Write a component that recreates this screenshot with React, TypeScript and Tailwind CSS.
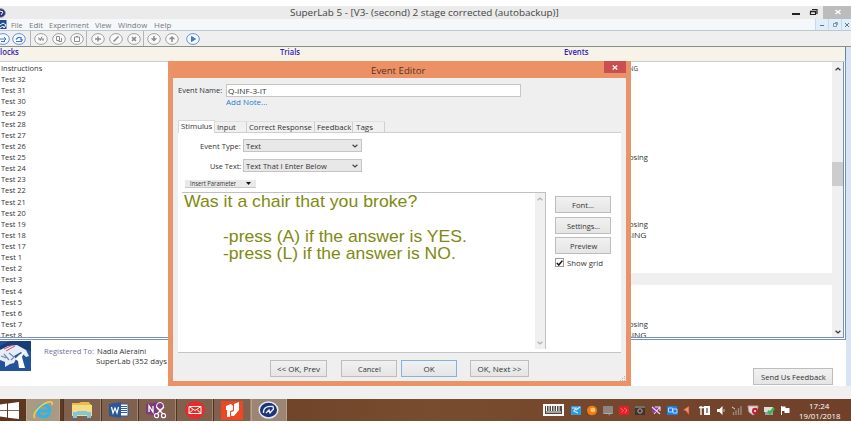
import { useLayoutEffect, useRef, useState } from "react";
import type { ReactNode } from "react";

/* Single line of text condensed or expanded to a fixed width. */
function Fit({ w, children, className = "" }: { w: number; children: string; className?: string }) {
  const ref = useRef<HTMLSpanElement>(null);
  const [k, setK] = useState(1);
  useLayoutEffect(() => {
    if (ref.current) setK(w / ref.current.offsetWidth);
  }, [w, children]);
  return (
    <span className={`inline-block shrink-0 whitespace-nowrap text-left ${className}`} style={{ width: w }}>
      <span ref={ref} className="inline-block origin-left" style={{ transform: `scaleX(${k})` }}>
        {children}
      </span>
    </span>
  );
}

const blocks: [string, number][] = [
  ["Instructions", 41],
  ...[32, 31, 30, 29, 28, 27, 26, 25, 24, 23, 22, 21, 20, 19, 18, 17].map((n): [string, number] => [`Test ${n}`, 25]),
  ...[1, 2, 3, 4, 5, 6, 7, 8].map((n): [string, number] => [`Test ${n}`, 21]),
];

const events: Record<number, [string, number]> = {
  0: ["ING", 11],
  8: ["losing", 21],
  14: ["losing", 21],
  15: ["SING", 19],
  23: ["losing", 21],
  24: ["SING", 19],
};

function RoundTool({ blue, children }: { blue?: boolean; children: ReactNode }) {
  return (
    <svg
      className={blue ? "h-[12px] w-[14px] shrink-0 text-[#3b78d8]" : "h-[12px] w-[14px] shrink-0 text-[#8c8c8c]"}
      viewBox="0 0 14 12"
      fill="none"
      stroke="currentColor"
    >
      <ellipse cx="7" cy="6" rx="6.3" ry="5.4" fill="#fafafa" strokeWidth="0.8" />
      {children}
    </svg>
  );
}

function Divider() {
  return <div className="h-full w-px shrink-0 bg-[#b4b4b4]" />;
}

function Chevron({ up, className = "" }: { up?: boolean; className?: string }) {
  return (
    <svg className={`h-[4px] w-[6px] ${className}`} viewBox="0 0 6 4" fill="none" stroke="currentColor" strokeWidth="1.2">
      <path d={up ? "M.6 3.3L3 1l2.4 2.3" : "M.6.7L3 3 5.4.7"} />
    </svg>
  );
}

function Button({ size, w, primary, children }: { size: string; w: number; primary?: boolean; children: string }) {
  return (
    <button
      className={`flex shrink-0 items-center justify-center border bg-gradient-to-b from-[#f1f1f1] to-[#e5e5e5] ${
        primary ? "border-[#7fb2e5]" : "border-[#bdbdbd]"
      } ${size}`}
    >
      <Fit w={w}>{children}</Fit>
    </button>
  );
}

function Combo({ label, lw, value, vw }: { label: string; lw: number; value: string; vw: number }) {
  return (
    <div className="flex h-[13px] items-center">
      <div className="flex w-[63px] justify-end pr-[2px]">
        <Fit w={lw} className="-mt-px">{label}</Fit>
      </div>
      <div className="flex h-[13px] w-[119px] items-center justify-between border border-[#c4c4c4] bg-[#e8e8e8] pr-[3px] pl-[2px]">
        <Fit w={vw}>{value}</Fit>
        <Chevron className="text-[#444]" />
      </div>
    </div>
  );
}

function EventEditor() {
  return (
    <div className="absolute top-[61px] left-[168px] flex h-[325px] w-[463px] flex-col border-x-[5px] border-b-[5px] border-[#e8936a] bg-[#efefef] text-[8px] leading-[11px] text-[#333]">
      <div className="flex h-[17px] shrink-0 bg-[#ec9166]">
        <div className="flex flex-1 items-center pl-[198px]">
          <Fit w={55} className="mt-[1px] text-[9.5px] text-[#553322]">Event Editor</Fit>
        </div>
        <div className="flex h-[12px] w-[22px] items-center justify-center bg-[#c94f50]">
          <svg className="h-[5px] w-[6px]" viewBox="0 0 6 5" stroke="#fff" strokeWidth="1.2">
            <path d="M.7.5l4.6 4M5.3.5l-4.6 4" />
          </svg>
        </div>
      </div>

      <div className="mt-[6px] flex h-[13px] shrink-0 items-center pl-[5px]">
        <Fit w={44} className="-mt-[3px]">Event Name:</Fit>
        <div className="ml-[4px] flex h-[13px] w-[295px] items-center border border-[#c6c6c6] bg-white pl-px">
          <Fit w={39} className="-mt-px">Q-INF-3-IT</Fit>
        </div>
      </div>
      <div className="flex h-[11px] shrink-0 items-center pl-[53px] text-[#2a7bd0]">
        <Fit w={41} className="-mt-[3px]">Add Note...</Fit>
      </div>

      <div className="mt-[12px] flex h-[13px] shrink-0 items-end pl-[5px]">
        <div className="z-10 flex h-[13px] w-[37px] items-center border-x border-t border-[#d8d8d8] bg-white pl-[2px]">
          <Fit w={31} className="-mt-[3px]">Stimulus</Fit>
        </div>
        <div className="flex h-[12px] items-center border-y border-[#cfcfcf] border-t-[#e0e0e0] bg-[#f0f0f0]">
          <div className="flex h-full w-[32px] items-center border-r border-[#cfcfcf] pl-[2px]"><Fit w={19} className="-mt-px">Input</Fit></div>
          <div className="flex h-full w-[68px] items-center border-r border-[#cfcfcf] pl-[2px]"><Fit w={63} className="-mt-px">Correct Response</Fit></div>
          <div className="flex h-full w-[38px] items-center border-r border-[#cfcfcf] pl-[2px]"><Fit w={34} className="-mt-px">Feedback</Fit></div>
          <div className="flex h-full w-[32px] items-center border-r border-[#cfcfcf] pl-[3px]"><Fit w={17} className="-mt-px">Tags</Fit></div>
        </div>
        <div className="h-px w-[236px] bg-[#cfcfcf]" />
      </div>

      <div className="ml-[5px] flex h-[220px] w-[443px] shrink-0 flex-col border-b border-[#c4c4c4] bg-white pt-[6px] pl-[2px]">
        <Combo label="Event Type:" lw={41} value="Text" vw={15} />
        <div className="h-[7px] shrink-0" />
        <Combo label="Use Text:" lw={31} value="Text That I Enter Below" vw={81} />
        <div className="mt-[8px] ml-[5px] flex h-[8px] w-[71px] shrink-0 items-center justify-between overflow-hidden border-b border-[#c8c8c8] bg-[#e9e9e9] pr-[5px] pl-[5px]">
          <div className="flex h-[5px] items-center overflow-hidden"><Fit w={46} className="text-[7px]">Insert Parameter</Fit></div>
          <svg className="h-[3px] w-[5px]" viewBox="0 0 5 3"><path d="M0 0h5L2.5 3z" fill="#111" /></svg>
        </div>
        <div className="mt-[4px] flex">
          <div className="ml-[2px] flex h-[157px] w-[364px] shrink-0 border-t border-r border-[#c0c0c0]">
            <div className="flex-1 pl-[2px] font-['Liberation_Sans',Arial,sans-serif] text-[17px] leading-[17px] text-[#808a10]">
              <div className="flex h-[18px]"><Fit w={233}>Was it a chair that you broke?</Fit></div>
              <div className="h-[17px]" />
              <div className="flex h-[17px] pl-[39px]"><Fit w={244}>-press (A) if the answer is YES.</Fit></div>
              <div className="flex h-[17px] pl-[39px]"><Fit w={233}>-press (L) if the answer is NO.</Fit></div>
            </div>
            <div className="flex w-[10px] flex-col items-center justify-between bg-[#f0f0f0] py-[4px] text-[#b0b0b0]">
              <Chevron up />
              <Chevron />
            </div>
          </div>
          <div className="ml-[9px] flex flex-col pt-[4px]">
            <Button size="h-[17px] w-[56px]" w={22}>Font...</Button>
            <div className="h-[4px]" />
            <Button size="h-[17px] w-[56px]" w={33}>Settings...</Button>
            <div className="h-[3px]" />
            <Button size="h-[17px] w-[56px]" w={27}>Preview</Button>
            <div className="mt-[3px] flex items-center">
              <div className="flex h-[9px] w-[9px] items-center justify-center border border-[#999] bg-white">
                <svg className="h-[6px] w-[7px]" viewBox="0 0 7 6" fill="none" stroke="#111" strokeWidth="1.5"><path d="M.8 3l2 2L6.4.6" /></svg>
              </div>
              <Fit w={36} className="ml-[3px]">Show grid</Fit>
            </div>
          </div>
        </div>
      </div>

      <div className="mt-[7px] flex pl-[97px]">
        <Button size="h-[17px] w-[57px]" w={43}>{"<< OK, Prev"}</Button>
        <div className="w-[14px]" />
        <Button size="h-[17px] w-[56px]" w={23}>Cancel</Button>
        <div className="w-[4px]" />
        <Button size="h-[17px] w-[56px]" w={11} primary>OK</Button>
        <div className="w-[13px]" />
        <Button size="h-[17px] w-[59px]" w={44}>{"OK, Next >>"}</Button>
      </div>
      <svg className="absolute right-0 bottom-0 h-[5px] w-[6px]" viewBox="0 0 6 5" fill="#b5b5b5">
        <path d="M4 0h1v1H4zM2 2h1v1H2zM4 2h1v1H4zM0 4h1v1H0zM2 4h1v1H2zM4 4h1v1H4z" />
      </svg>
    </div>
  );
}

function TaskSlot({ active, children }: { active?: boolean; children: ReactNode }) {
  return (
    <div
      className={`flex h-full shrink-0 items-center justify-center border-x ${
        active ? "w-[36px] border-[#b3a294] bg-[#9c8571]" : "w-[37.6px] border-l-[#4f3220] border-r-[#a28672] bg-[#80614e]"
      }`}
    >
      {children}
    </div>
  );
}

function Taskbar() {
  return (
    <div className="flex h-[22px] shrink-0 bg-gradient-to-r from-[#5d3520] via-[#784c2e] to-[#70402a]">
      <div className="flex w-[26px] shrink-0 items-center">
        <svg className="h-[17px] w-[20px]" viewBox="0 0 20 17" fill="#fff">
          <path d="M0 2.5l7-1v6.7H0zM8 1.4L19 0v8.2H8zM0 9h7v6.6l-7-1zM8 9h11v8L8 15.8z" />
        </svg>
      </div>
      <div className="flex h-full w-[34px] shrink-0 items-center justify-center border-x border-[#b5a697] bg-[#aa9a82]">
        <svg className="h-[20px] w-[24px]" viewBox="0 0 24 20" fill="none">
          <path d="M18.500 13.500C16 18 8 18 6.700 12.500 5.500 7.500 10 4.500 14 5.200c3.800.8 4.800 3.500 4.700 5.800H7" stroke="#2bb5e9" strokeWidth="3.2" />
          <path d="M4 18c-4-3 5-13 12-15.500 5-1.800 6 0 5 2.500" stroke="#f6cf45" strokeWidth="1.6" />
        </svg>
      </div>
      <div className="ml-[3px] flex">
        <TaskSlot>
          <svg className="h-[18px] w-[22px]" viewBox="0 0 22 18">
            <path d="M1 2h7l2-1h8l1 2h1v11H1z" fill="#e7bd50" />
            <path d="M1 4h20v11H1z" fill="#f7dc83" />
            <path d="M2 11h3l2-1h8l2 1h3v6h-4v-3H6v3H2z" fill="#7fc6df" />
          </svg>
        </TaskSlot>
        <TaskSlot>
          <svg className="h-[16px] w-[20px]" viewBox="0 0 20 16">
            <path d="M9 2h10v12H9z" fill="#fff" stroke="#2c5aa0" />
            <path d="M11 4.5h7M11 6.5h7M11 8.5h7M11 10.5h7" stroke="#2c5aa0" />
            <path d="M0 2l12-2v16L0 14z" fill="#2b579a" />
            <path d="M2.5 5l1.5 6L6 6l2 5 1.5-6" stroke="#fff" fill="none" strokeWidth="1.2" />
          </svg>
        </TaskSlot>
        <TaskSlot>
          <svg className="h-[18px] w-[21px]" viewBox="0 0 21 18">
            <path d="M0 3l12-2v14L0 13z" fill="#80397b" />
            <path d="M3 11V5l4 6V5" stroke="#fff" fill="none" strokeWidth="1.3" />
            <circle cx="14" cy="5" r="3.5" fill="#80397b" stroke="#fff" />
            <path d="M10.500 6l6.500 7M18 6l-7 7" stroke="#fff" strokeWidth="1.2" />
            <circle cx="10.5" cy="14.7" r="2" stroke="#fff" strokeWidth="1.2" fill="#80397b" />
            <circle cx="17.5" cy="14.7" r="2" stroke="#fff" strokeWidth="1.2" fill="#80397b" />
          </svg>
        </TaskSlot>
        <TaskSlot>
          <svg className="h-[18px] w-[20px]" viewBox="0 0 20 18" fill="none">
            <ellipse cx="10" cy="9" rx="10" ry="9" fill="#e62b2b" />
            <path d="M4 5.5h12v7H4zM4 5.5l6 4 6-4M4 12.5l4-4M16 12.5l-4-4" stroke="#fff" />
          </svg>
        </TaskSlot>
        <TaskSlot>
          <svg className="h-[19px] w-[22px]" viewBox="0 0 22 19">
            <path d="M0 0h22v19H0z" fill="#ee4723" />
            <path d="M5 5l5-2 2 2v4l-3 1v6H6V9H5zM13 3l5-2v8l-5 6h-3v-4l3-1z" fill="#fff" />
          </svg>
        </TaskSlot>
        <TaskSlot active>
          <svg className="h-[18px] w-[21px]" viewBox="0 0 21 18" fill="none">
            <ellipse cx="10.5" cy="9" rx="9.3" ry="8" fill="#1d3476" stroke="#e6e9f4" strokeWidth="1.5" />
            <path d="M5.500 12C5 6.500 9 5 15 5.500l.500 2.500-3.500 4-1-3-3 3" stroke="#e8eefa" strokeWidth="1.3" />
          </svg>
        </TaskSlot>
      </div>
      <div className="flex-1" />
      <Tray />
      <div className="flex w-[58px] shrink-0 flex-col items-center pt-[2px] pr-[6px] text-[8px] leading-[10px] text-white">
        <Fit w={20}>17:24</Fit>
        <Fit w={41}>19/01/2018</Fit>
      </div>
    </div>
  );
}

/* Notification-area icons, spaced 16px apart after the keyboard indicator. */
function Tray() {
  return (
    <svg className="h-[22px] w-[250px] shrink-0" viewBox="0 0 250 22" fill="none">
      <path d="M0 5h21v12H0z" fill="#f6f6f0" />
      <path d="M2 7h17v8H2z" fill="#4e4944" />
      <path d="M3 7h1v5H3zM5.500 7h1v5h-1zM8 7h1v5H8zM10.500 7h1v5h-1zM13 7h1v5h-1zM15.500 7h1v5h-1zM3 12.500h15v1H3z" fill="#fff" />
      <path d="M28 7h10v9H28z" fill="#2e9be0" />
      <path d="M29 9h4l-2 3 4 2M33 11l4-3" stroke="#cbeaff" strokeWidth="1.2" />
      <ellipse cx="49" cy="11.5" rx="5" ry="4.8" fill="#f27a16" />
      <ellipse cx="49.8" cy="11" rx="2.5" ry="2.3" fill="#ffd06a" />
      <path d="M60 7h10v8h-3v2l-2-2h-5z" fill="#8d8580" />
      <path d="M61 14.5h8" stroke="#aaa" />
      <path d="M76 7h10v9H76z" fill="#e61e2c" />
      <path d="M77.500 9.500l3 2-2 2M81 9l3 2-2 3" stroke="#ff8080" strokeWidth="0.8" />
      <path d="M92 7h10v9H92z" fill="#3d3431" />
      <path d="M92 8h10" stroke="#b3a79e" />
      <circle cx="97" cy="12" r="2.2" stroke="#b8b0a8" />
      <path d="M109 7h6v7h-6z" fill="#8a4191" />
      <path d="M109 8l8 7M117 8l-6 7M112 8h5v4" stroke="#edd5f3" strokeWidth="1.1" />
      <path d="M124 7h10l1 9h-11z" fill="#1c7de6" />
      <path d="M125.500 9h4v4h-4zM130 10h4v4h-4z" stroke="#c4e4ff" strokeWidth="0.9" />
      <path d="M140 11l6-4v9l-3-4z" fill="#f29170" stroke="#b93c25" strokeWidth="0.6" />
      <path d="M156 8.500h5M158 7v9" stroke="#fff" strokeWidth="1.3" />
      <path d="M161 7h6v9h-6z" fill="#fff" />
      <path d="M163 9h2v5h-2z" fill="#a58a78" />
      <path d="M174 10h2.500l3-3v9l-3-3H174z" fill="#fff" />
      <path d="M181 10v3" stroke="#ccb5a5" />
      <path d="M190.500 13v3M193 11v5M195.500 9v7M198 7v9" stroke="#998b80" strokeWidth="1.3" />
      <path d="M189 8l3 2" stroke="#ddd" />
      <path d="M205 7h10l-1 6-4 3-4-3z" fill="#e6dadb" stroke="#bda0a0" />
      <ellipse cx="212" cy="12" rx="3" ry="3.2" fill="#c32236" />
      <path d="M211 11l2 2M213 11l-2 2" stroke="#fff" strokeWidth="0.7" />
      <path d="M221 8h9v5h-9z" fill="#ddd" />
      <path d="M222 13h8v3h-8z" fill="#96a2a3" />
      <path d="M225 12l2 2 4-5" stroke="#3ab54a" strokeWidth="2.5" />
      <path d="M238.500 7v9" stroke="#fff" />
      <path d="M238 7.500h4.500v1.500h4V14h-5v-2H238z" fill="#fff" />
    </svg>
  );
}

export default function App() {
  return (
    <div className="relative flex h-[424px] w-[851px] flex-col overflow-hidden bg-white pt-[6px] font-['Open_Sans','Noto_Sans',sans-serif] text-[8px] leading-[11px] text-[#333]">
      <div className="flex h-[13px] shrink-0 items-center bg-[#ebebeb]">
        <div className="w-[290px] shrink-0">
          <svg className="h-[10px] w-[6px]" viewBox="0 0 6 10">
            <ellipse cx="0" cy="5" rx="5.5" ry="4.5" fill="#30306e" stroke="#aaa6c2" />
            <path d="M0 3l3 1-2 3" fill="none" stroke="#fff" />
          </svg>
        </div>
        <Fit w={269} className="text-[9.5px] text-[#444]">SuperLab 5 - [V3- (second) 2 stage corrected (autobackup)]</Fit>
        <div className="flex-1" />
        <svg className="h-[13px] w-[59px] shrink-0" viewBox="0 0 59 13" fill="none">
          <path d="M0 8h8" stroke="#222" strokeWidth="2" />
          <path d="M18.500 5.500h5v3h-5zM20 3.500h5v4.500" stroke="#222" strokeWidth="1.2" />
          <path d="M18 5.500h6" stroke="#222" strokeWidth="1.6" />
          <path d="M31 0h28v13H31z" fill="#bcbcbc" />
          <path d="M43.500 4l5 4M48.500 4l-5 4" stroke="#fff" strokeWidth="1.4" />
        </svg>
      </div>

      <div className="flex h-[12px] shrink-0 items-center border-b border-[#bfc8cd] bg-[#f5f8fa] text-[#777]">
        <svg className="h-[9px] w-[7px] shrink-0" viewBox="0 0 7 9">
          <path d="M0 0h6.500v9H0z" fill="#1f4c94" />
          <path d="M0 5l3-2 3 2-2 3-1-2-3 2" fill="none" stroke="#fff" />
        </svg>
        <Fit w={12} className="ml-[4px]">File</Fit>
        <Fit w={14} className="ml-[6px]">Edit</Fit>
        <Fit w={40} className="ml-[6px]">Experiment</Fit>
        <Fit w={16} className="ml-[6px]">View</Fit>
        <Fit w={29} className="ml-[7px]">Window</Fit>
        <Fit w={17} className="ml-[7px]">Help</Fit>
        <div className="flex-1" />
        <div className="flex h-full shrink-0 gap-px bg-[#c4d9ec] pl-px text-[#5a7693]">
          <div className="flex w-[12px] items-center justify-center bg-[#e0eefa]">
            <div className="mt-px h-px w-[4px] bg-[#5a7693]" />
          </div>
          <div className="flex w-[12px] items-center justify-center bg-[#e0eefa]">
            <svg className="h-[5px] w-[5px]" viewBox="0 0 5 5" fill="none" stroke="currentColor" strokeWidth="0.7">
              <path d="M.5 1.500h3v3h-3zM2 .5h2.500V3" />
            </svg>
          </div>
          <div className="flex w-[9px] items-center justify-center bg-[#e0eefa]">
            <svg className="h-[4px] w-[4px]" viewBox="0 0 4 4" stroke="currentColor"><path d="M0 0l4 4M4 0L0 4" /></svg>
          </div>
        </div>
      </div>

      <div className="flex h-[16px] shrink-0 items-center border-b border-[#8b8f88] bg-[#efefef]">
        <div className="-ml-[4px] flex gap-[2px]">
          <RoundTool blue><path d="M4 6h6M8 4l2 2-2 2M5 8.500h4" /></RoundTool>
          <RoundTool blue><path d="M4 8.500h6M4 6.500l2-2h3v3M10 6v2" strokeWidth="1.2" /></RoundTool>
        </div>
        <div className="ml-[4px] h-full"><Divider /></div>
        <div className="ml-[3px] flex gap-[4px]">
          <RoundTool><path d="M4 6h6M8 3.500L6 8M4.500 4.500l2 2.500M9 6v2" /></RoundTool>
          <RoundTool><path d="M4.500 3.500h3v4h-3zM6.500 8.500h3V5" /></RoundTool>
          <RoundTool><path d="M4.500 4h5v4.500h-5zM6 3.500h2" /></RoundTool>
        </div>
        <div className="ml-[2px] h-full"><Divider /></div>
        <div className="ml-[4px] flex gap-[4px]">
          <RoundTool><path d="M4 6h6M7 3.500v5" strokeWidth="1.5" /></RoundTool>
          <RoundTool><path d="M4.500 8.500l5-5" strokeWidth="1.6" /></RoundTool>
          <RoundTool><path d="M5 4.200l4 3.600M9 4.200L5 7.800" strokeWidth="1.6" /></RoundTool>
        </div>
        <div className="ml-[2px] h-full"><Divider /></div>
        <div className="ml-[3px] flex gap-[4px]">
          <RoundTool><path d="M7 3v3M5.500 6h3L7 7.500z" strokeWidth="1.5" /></RoundTool>
          <RoundTool><path d="M7 9V6M5.500 5.500h3L7 4z" strokeWidth="1.5" /></RoundTool>
        </div>
        <div className="ml-[7px] flex">
          <RoundTool blue><path d="M5.500 3.500v5l4-2.500z" fill="currentColor" /></RoundTool>
        </div>
      </div>

      <div className="flex h-[339px] shrink-0">
        <div className="flex min-w-0 flex-1 flex-col">
          <div className="flex h-[15px] shrink-0 border-r border-b border-[#c9cdd6] border-r-[#6482aa] bg-[#f8f3e8] text-[8px] leading-[10px] font-semibold text-[#3222b4]">
            <div className="w-[280px]"><Fit w={24} className="-ml-[5px]">Blocks</Fit></div>
            <div className="w-[284px]"><Fit w={20}>Trials</Fit></div>
            <Fit w={25}>Events</Fit>
          </div>
          <div className="flex h-[278px] shrink-0 overflow-hidden border-r-[3px] border-b-[3px] border-double border-[#7891b4] bg-white">
            <div className="w-[623px] shrink-0 pl-px">
              {blocks.map(([name, w]) => (
                <div key={name} className="flex h-[11.13px] items-center">
                  <Fit w={w}>{name}</Fit>
                </div>
              ))}
            </div>
            <div className="flex-1">
              {blocks.map(([name], i) => (
                <div key={name} className={`flex h-[11.13px] items-center pl-[4px] ${i === 19 ? "bg-[#efefef]" : ""}`}>
                  {events[i] && <Fit w={events[i][1]}>{events[i][0]}</Fit>}
                </div>
              ))}
            </div>
            <div className="flex w-[11px] shrink-0 flex-col items-center bg-[#f0f0f0] pt-[5px] pb-[3px] text-[#333]">
              <Chevron up className="shrink-0" />
              <div className="mt-[91px] h-[24px] w-full shrink-0 bg-[#cdcdcd]" />
              <div className="flex-1" />
              <Chevron className="shrink-0" />
            </div>
          </div>
          <div className="flex flex-1 bg-white">
            <svg className="mt-px h-[30px] w-[31px] shrink-0" viewBox="0 0 31 30">
              <path d="M0 0h31v30H0z" fill="#245298" />
              <path d="M0 5L10 0h21v10L18 6 0 15z" fill="#183d79" />
              <path d="M0 9l8-4 9-1 9 5 3 6-3 1-5-5-7 4 2 3-2 4-4 1-5 3v-5L0 19z" fill="#e7edf6" />
              <path d="M19 14l6-4-3 6 3 11h-6l-1-7-3-2z" fill="#fff" />
              <path d="M4 8l9-4M6 10l9-5" stroke="#cc5467" strokeWidth="1" />
              <path d="M9 12l5 4-3 3M1 15l5 2M4 13l5 6" stroke="#7088b8" strokeWidth="1.2" fill="none" />
            </svg>
            <div className="ml-[13px] pt-[5px]">
              <div className="flex h-[10px] items-center">
                <Fit w={50} className="text-[#7070a2]">Registered To:</Fit>
                <Fit w={49} className="ml-[3px]">Nadia Aleraini</Fit>
              </div>
              <div className="flex h-[11px] items-center pl-[52px]"><Fit w={71}>SuperLab (352 days</Fit></div>
            </div>
            <div className="flex-1" />
            <div className="mt-[28px] mr-[13px]">
              <Button size="h-[17px] w-[80px]" w={65}>Send Us Feedback</Button>
            </div>
          </div>
        </div>
        <div className="w-[5px] shrink-0 bg-[#d7e4f2]" />
      </div>

      <div className="h-[13px] shrink-0 bg-[#f0f0f0]" />
      <Taskbar />
      <EventEditor />
    </div>
  );
}
